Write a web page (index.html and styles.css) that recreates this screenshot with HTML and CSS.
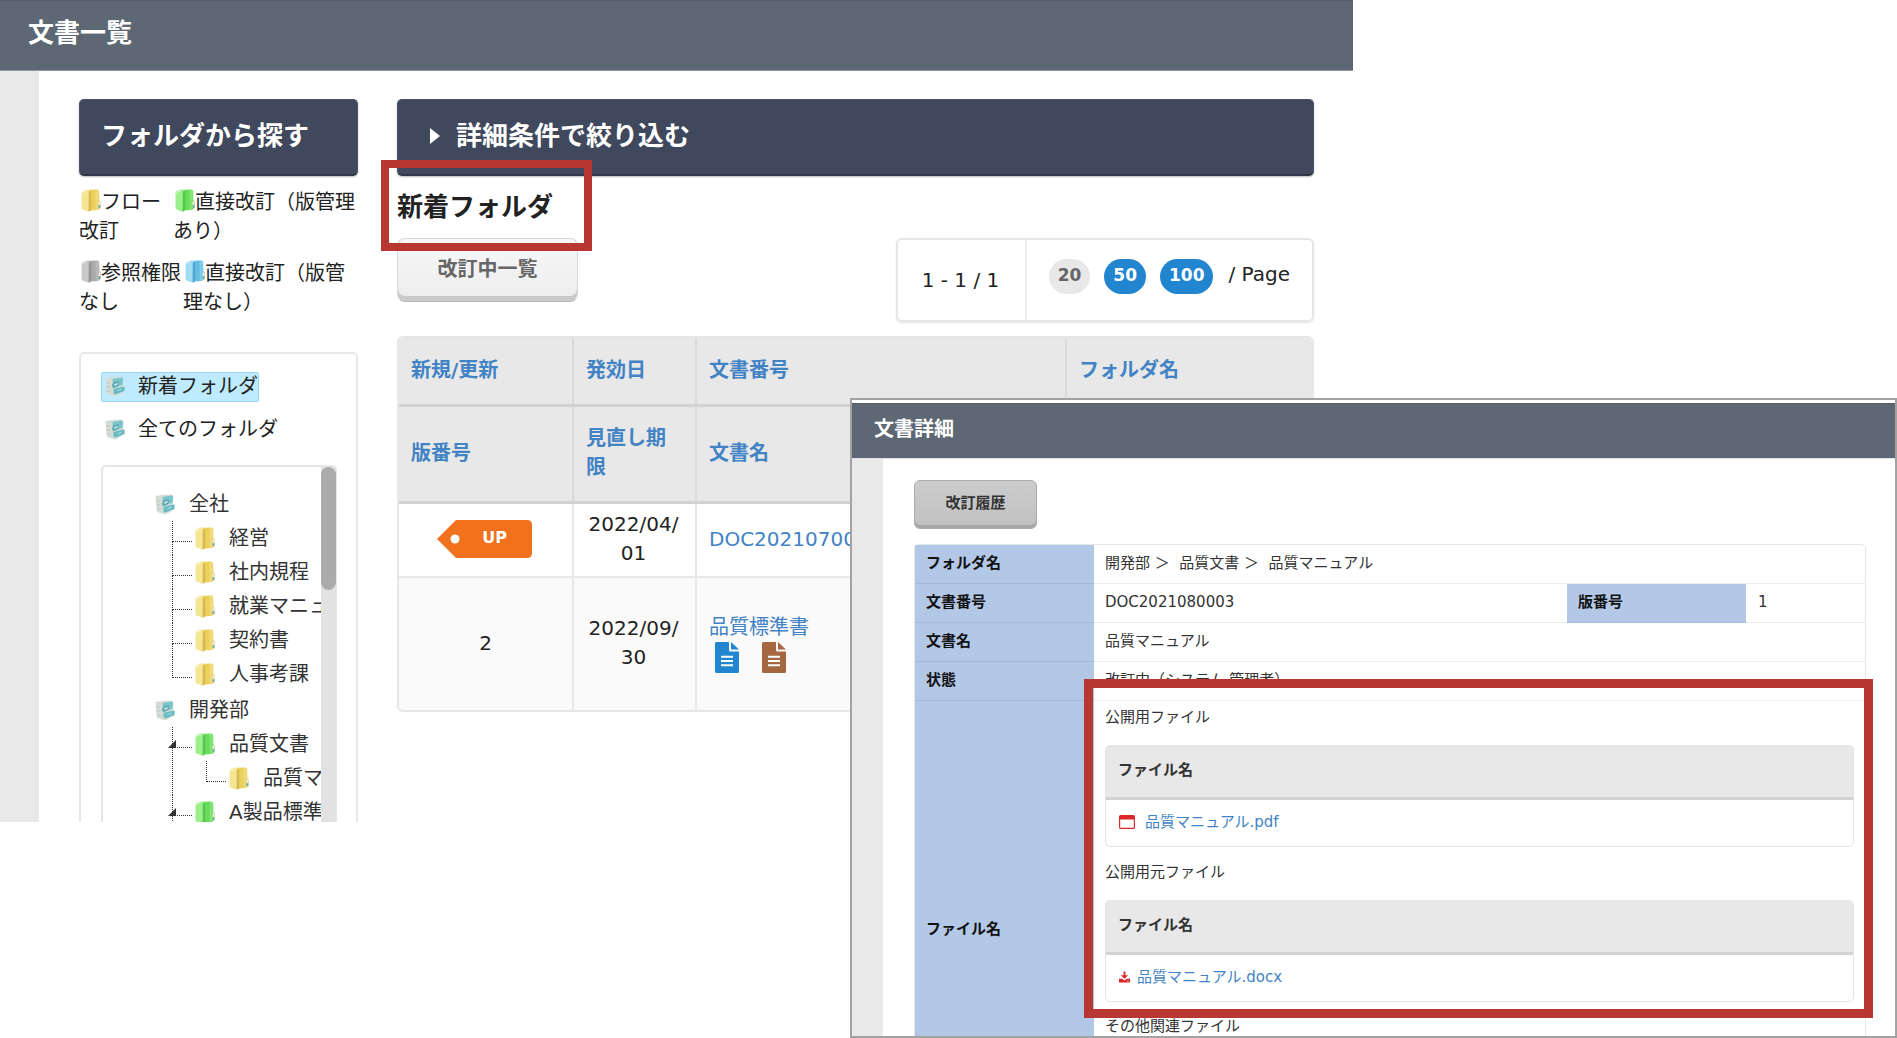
FILE: index.html
```html
<!DOCTYPE html>
<html lang="ja">
<head>
<meta charset="utf-8">
<title>文書一覧</title>
<link rel="stylesheet" href="styles.css">
</head>
<body>
<svg class="sprite" aria-hidden="true">
  <symbol id="folder" viewBox="0 0 20 23">
    <path d="M7 2.500 Q7 1 8.500 .8 L16 .6 Q18 .6 18.200 2.500 L18.500 19 Q18.500 21 16.500 21 L8 21.500 Z" fill="var(--mid)"/>
    <path d="M14.500 1 L16 .8 Q17.500 1 17.600 2.500 L18 19 Q18 20.500 16 21 L14.800 21 Z" fill="var(--light)" opacity=".5"/>
    <path d="M.5 4 Q.5 2.300 2.500 1.800 L5 .8 Q9 0 10 2 L10.300 20 Q10 22.600 7 22.600 Q5.500 22.600 4.500 21.500 L2 20.800 Q.5 20.500 .5 19 Z" fill="var(--light)"/>
    <path d="M7.800 3 Q8 2 9 1.400 Q10 1.800 10.100 3 L10.400 20 Q10 22.600 7.600 22.600 Z" fill="var(--dark)" opacity=".75"/>
    <path d="M1.500 4.500 Q1.500 3 3 2.600 L5.500 2" fill="none" stroke="#fff" stroke-width=".8" opacity=".7"/>
    <rect x="17.200" y="12" width="2.400" height="7.500" rx="1.200" fill="#f5f3e0" stroke="var(--dark)" stroke-width=".4"/>
    <rect x="17.500" y="16" width="1.800" height="3" rx=".8" fill="#5fb0a0"/>
  </symbol>
  <symbol id="cabinet" viewBox="0 0 20 21">
    <path d="M.5 2 L7 1 L16.500 .5 L18.500 2 L18 10 L19.500 11 L19.500 15.500 L10.500 20.500 L2 18 Z" fill="#d5dcd6"/>
    <path d="M1 6.500 L5 7.500 M1.300 10.500 L5.300 11.500 M1.500 14.500 L5.500 15.800" stroke="#b9c3be" stroke-width=".8"/>
    <path d="M7.500 3 L16.500 1.500 L18 2.500 L17.500 9 L8 11 Z" fill="#79c5cb"/>
    <path d="M7 9 L9 6 L14 5.500 L13.500 10 L8 12.500 Z" fill="#5ba8b2"/>
    <path d="M9 8 L13 7 L12.500 8.700 L9.500 10 Z" fill="#c5e4e6"/>
    <path d="M8.500 13 L14 11.500 L19.500 10.500 L19.500 14.800 L10.500 18.500 L8.500 17.500 Z" fill="#68bac3"/>
    <path d="M12.500 14.500 L16.500 13.200" stroke="#b5e0e4" stroke-width="1"/>
  </symbol>
  <symbol id="doc" viewBox="0 0 24 32">
    <path d="M1.500 0 H14 V8 Q14 9.500 15.500 9.500 H24 V29.500 Q24 31 22.500 31 H1.500 Q0 31 0 29.500 V1.500 Q0 0 1.500 0 Z" fill="currentColor"/>
    <path d="M16 0 L24 7.500 H16 Z" fill="currentColor"/>
    <path d="M6 14.800 H18 M6 19 H18 M6 23.200 H18" stroke="#fff" stroke-width="1.900"/>
  </symbol>
</svg>

<div class="canvas">
  <main class="window list-window">
    <header class="title-bar"><h1>文書一覧</h1></header>
    <div class="window-body">
      <aside class="rail"></aside>
      <div class="list-content">
        <section class="sidebar">
          <h2 class="panel-title">フォルダから探す</h2>
          <div class="legend">
            <span class="legend-flow"><svg class="folder yellow"><use href="#folder"/></svg>フロー改訂</span>
            <span><svg class="folder green"><use href="#folder"/></svg>直接改訂（版管理あり）</span>
          </div>
          <div class="legend">
            <span class="legend-none"><svg class="folder grey"><use href="#folder"/></svg>参照権限なし</span>
            <span><svg class="folder blue"><use href="#folder"/></svg>直接改訂（版管理なし）</span>
          </div>
          <nav class="folder-box">
            <a href="#" class="root-link selected"><svg class="cabinet"><use href="#cabinet"/></svg>新着フォルダ</a>
            <a href="#" class="root-link"><svg class="cabinet"><use href="#cabinet"/></svg>全てのフォルダ</a>
            <div class="tree-box">
              <ul class="tree">
                <li><a href="#"><svg class="cabinet"><use href="#cabinet"/></svg>全社</a>
                  <ul class="branch">
                    <li><a href="#"><svg class="folder yellow"><use href="#folder"/></svg>経営</a></li>
                    <li><a href="#"><svg class="folder yellow"><use href="#folder"/></svg>社内規程</a></li>
                    <li><a href="#"><svg class="folder yellow"><use href="#folder"/></svg>就業マニュ</a></li>
                    <li><a href="#"><svg class="folder yellow"><use href="#folder"/></svg>契約書</a></li>
                    <li><a href="#"><svg class="folder yellow"><use href="#folder"/></svg>人事考課</a></li>
                  </ul>
                </li>
                <li><a href="#"><svg class="cabinet"><use href="#cabinet"/></svg>開発部</a>
                  <ul class="branch continued">
                    <li class="open"><a href="#"><svg class="folder green"><use href="#folder"/></svg>品質文書</a>
                      <ul class="branch">
                        <li><a href="#"><svg class="folder yellow"><use href="#folder"/></svg>品質マ</a></li>
                      </ul>
                    </li>
                    <li class="open"><a href="#"><svg class="folder green"><use href="#folder"/></svg>A製品標準</a></li>
                  </ul>
                </li>
              </ul>
              <div class="scrollbar"><div class="thumb"></div></div>
            </div>
          </nav>
        </section>

        <section class="results">
          <h2 class="panel-title filter-title"><svg class="caret" viewBox="0 0 10 16"><path d="M0 0 L10 8 L0 16 Z" fill="#fff"/></svg>詳細条件で絞り込む</h2>
          <h3 class="folder-heading">新着フォルダ</h3>
          <div class="toolbar">
            <button type="button" class="btn btn-light">改訂中一覧</button>
            <div class="pager">
              <div class="pager-range">1 - 1 / 1</div>
              <div class="pager-size">
                <a href="#" class="pill current">20</a>
                <a href="#" class="pill">50</a>
                <a href="#" class="pill">100</a>
                <span>/ Page</span>
              </div>
            </div>
          </div>
          <div class="doc-table-frame">
            <table class="doc-table">
              <colgroup><col class="col-kind"><col class="col-date"><col class="col-doc"><col></colgroup>
              <thead>
                <tr class="head-first"><th><a href="#">新規/更新</a></th><th><a href="#">発効日</a></th><th><a href="#">文書番号</a></th><th><a href="#">フォルダ名</a></th></tr>
                <tr class="head-second"><th><a href="#">版番号</a></th><th><a href="#">見直し期限</a></th><th colspan="2"><a href="#">文書名</a></th></tr>
              </thead>
              <tbody>
                <tr class="row-first"><td class="center"><span class="tag"><svg viewBox="0 0 95 38" class="tag-shape"><path d="M19 0 H90 Q95 0 95 5 V33 Q95 38 90 38 H19 L0 19 Z" fill="#f2711c"/><circle cx="18" cy="19" r="4.500" fill="#fff"/></svg><b>UP</b></span></td><td class="date">2022/04/<br>01</td><td colspan="2"><a href="#">DOC20210700</a></td></tr>
                <tr class="row-second"><td class="center">2</td><td class="date">2022/09/<br>30</td><td colspan="2"><a href="#">品質標準書</a>
                  <div class="doc-icons"><svg class="doc doc-blue"><use href="#doc"/></svg><svg class="doc doc-brown"><use href="#doc"/></svg></div></td></tr>
              </tbody>
            </table>
          </div>
        </section>
      </div>
    </div>
  </main>

  <section class="window detail-window">
    <header class="title-bar detail-bar"><h1>文書詳細</h1></header>
    <div class="window-body">
      <aside class="rail detail-rail"></aside>
      <div class="detail-content">
        <button type="button" class="btn btn-dark">改訂履歴</button>
        <table class="detail-table">
          <colgroup><col class="col-label"><col><col class="col-label"><col class="col-version"></colgroup>
          <tbody>
            <tr><th>フォルダ名</th><td colspan="3">開発部 ＞&nbsp; 品質文書 ＞&nbsp; 品質マニュアル</td></tr>
            <tr><th>文書番号</th><td>DOC2021080003</td><th>版番号</th><td class="version">1</td></tr>
            <tr><th>文書名</th><td colspan="3">品質マニュアル</td></tr>
            <tr><th>状態</th><td colspan="3">改訂中（システム 管理者）</td></tr>
            <tr><th>ファイル名</th><td colspan="3" class="files">
              <div class="marked">
                <p>公開用ファイル</p>
                <table class="file-table">
                  <thead><tr><th>ファイル名</th></tr></thead>
                  <tbody><tr><td><a href="#" class="file-link"><svg class="icon-window" viewBox="0 0 16 14"><path d="M1.500 0 H14.500 Q16 0 16 1.500 V12.500 Q16 14 14.500 14 H1.500 Q0 14 0 12.500 V1.500 Q0 0 1.500 0 Z M1.200 4.500 V12.800 H14.800 V4.500 Z" fill="#db2828" fill-rule="evenodd"/></svg>品質マニュアル.pdf</a></td></tr></tbody>
                </table>
                <p>公開用元ファイル</p>
                <table class="file-table">
                  <thead><tr><th>ファイル名</th></tr></thead>
                  <tbody><tr><td><a href="#" class="file-link tight"><svg class="icon-download" viewBox="0 0 12 12"><path d="M5 0 H7 V4 H10 L6 8 L2 4 H5 Z M0 8 H3.500 L6 9.800 L8.500 8 H12 V12 H0 Z" fill="#db2828"/><path d="M8.500 10.500 H10.800" stroke="#fff" stroke-width=".6"/></svg>品質マニュアル.docx</a></td></tr></tbody>
                </table>
              </div>
              <p>その他関連ファイル</p>
            </td></tr>
          </tbody>
        </table>
      </div>
    </div>
  </section>
</div>
</body>
</html>
```
FILE: styles.css
```css
* { box-sizing: border-box; }

body {
  margin: 0;
  overflow: hidden;
  background: #fff;
  color: #222;
  font: 20px/29px "DejaVu Sans", "Noto Sans CJK JP", sans-serif;
}

h1, h2, h3, p, ul { margin: 0; padding: 0; }
a { color: #4183c4; text-decoration: none; }
svg { display: block; flex: none; }
.sprite { position: absolute; width: 0; height: 0; }

/* two overlapping windows */
.canvas {
  display: grid;
  grid-template-columns: minmax(0, 850fr) minmax(0, 503fr) minmax(0, 544fr);
  grid-template-rows: 398px 424px minmax(0, 1fr);
  height: 100vh;
}
.window { display: flex; flex-direction: column; min-height: 0; overflow: hidden; background: #fff; }
.list-window { grid-area: 1 / 1 / 3 / 3; }
.detail-window {
  grid-area: 2 / 2 / 4 / 4;
  z-index: 1;
  padding-top: 3px;
  border: 2px solid #a2a2a2;
  font-size: 15px;
  line-height: 22px;
}

.title-bar {
  flex: none;
  height: 71px;
  padding: 18px 28px;
  background: #5d6874;
  border-top: 1px solid #535e69;
  border-bottom: 1px solid #8d959e;
  color: #fff;
}
.title-bar h1 { font-size: 26px; line-height: 28px; }
.detail-bar { height: 56px; padding: 11px 22px; border-bottom-color: #dfe1e4; }
.detail-bar h1 { font-size: 20px; }

.window-body { display: flex; flex: 1; min-height: 0; }
.rail { flex: none; width: 39px; background: #e9e9e9; }
.detail-rail { width: 31px; }

/* list window */
.list-content { display: flex; flex: 1; gap: 39px; min-width: 0; padding: 28px 39px 0 40px; }
.sidebar { flex: none; width: 279px; }
.results { flex: 1; min-width: 0; }

.panel-title {
  display: flex;
  align-items: center;
  height: 77px;
  padding: 0 21px 2px;
  border: 1px solid #4b546a;
  border-bottom: 2px solid #2f3749;
  border-radius: 5px;
  background: #3f485c;
  box-shadow: 0 1px 2px #bbb;
  color: #fff;
  font-size: 26px;
}
.filter-title { gap: 16px; padding-left: 32px; }
.caret { width: 10px; height: 16px; }

.legend { display: flex; margin-bottom: 13px; }
.panel-title + .legend { margin-top: 12px; }
.legend span { flex: 1; }
.legend .legend-flow { flex: none; width: 94px; }
.legend .legend-none { flex: none; width: 104px; }
.legend .folder { display: inline-block; margin-left: 2px; vertical-align: -3px; }

.folder { width: 20px; height: 23px; }
.yellow { --light: #f5e693; --mid: #ecd05c; --dark: #cda83c; }
.green { --light: #9cf08c; --mid: #68dd5c; --dark: #3fb83b; }
.grey { --light: #c9c9c9; --mid: #a9a9a9; --dark: #828282; }
.blue { --light: #9fdcf2; --mid: #63bde2; --dark: #3696c4; }
.cabinet { width: 20px; height: 21px; }

.folder-box {
  display: flex;
  flex-direction: column;
  align-items: flex-start;
  margin-top: 35px;
  padding: 18px 20px;
  border: 2px solid #e8e8e8;
  border-radius: 5px;
}
.root-link {
  display: flex;
  align-items: center;
  gap: 13px;
  height: 30px;
  margin-bottom: 13px;
  padding: 0 0 1px 3px;
  border: 1px solid transparent;
  border-radius: 2px;
  color: #222;
}
.root-link.selected { border-color: #99d5f2; background: #beebff; }

.tree-box {
  display: flex;
  align-self: stretch;
  margin-top: 7px;
  margin-right: -1px;
  border: 2px solid #e6e6e6;
  border-right-width: 1px;
  border-radius: 5px;
}
.tree { flex: 1; min-width: 0; overflow: hidden; padding: 20px 0 20px 52px; list-style: none; white-space: nowrap; }
.tree ul { list-style: none; }
.tree a { display: flex; align-items: center; gap: 14px; height: 34px; color: #333; }
.branch { padding-left: 40px; margin-bottom: 2px; }
.branch .branch { padding-left: 34px; margin-bottom: 0; }
.branch li { position: relative; }
.branch li::before {
  content: "";
  position: absolute;
  left: -23px;
  top: 0;
  width: 19px;
  height: 20px;
  border-left: 1px dotted #333;
  border-bottom: 1px dotted #333;
}
.branch li:not(:last-child)::after,
.continued > li::after {
  content: "";
  position: absolute;
  left: -23px;
  top: 20px;
  bottom: 0;
  border-left: 1px dotted #333;
}
.open > a::before {
  content: "";
  position: absolute;
  left: -27px;
  top: 13px;
  border-left: 8px solid transparent;
  border-bottom: 8px solid #333;
}
.scrollbar { flex: none; width: 15px; background: #e2e2e2; }
.thumb { height: 123px; border-radius: 8px; background: #ababab; }

.folder-heading { display: inline-block; position: relative; margin: 16px 0; font-size: 26px; line-height: 30px; color: #222; }
.folder-heading::after {
  content: "";
  position: absolute;
  z-index: 1;
  inset: -32px -39px -29px -16px;
  border: 8px solid #b93732;
}

.toolbar { display: flex; justify-content: space-between; align-items: flex-start; }
.btn { border: 1px solid; border-radius: 8px; font-family: inherit; font-weight: bold; }
.btn-light {
  width: 181px;
  height: 64px;
  padding: 0 0 6px;
  border-color: #d8d8d8;
  border-bottom-color: #b8b8b8;
  background: linear-gradient(#f8f8f8, #ececec);
  box-shadow: inset 0 -5px #c9c9c9;
  color: #666;
  font-size: 20px;
}
.pager { display: flex; height: 84px; border: 2px solid #e6e6e6; border-radius: 6px; box-shadow: 0 1px 2px #e2e2e2; }
.pager-range { width: 129px; padding: 26px 0 0 24px; border-right: 2px solid #eee; }
.pager-size { display: flex; gap: 14px; padding: 19px 22px 0; line-height: 30px; }
.pill {
  height: 35px;
  padding: 0 9px;
  border-radius: 18px;
  background: #2185d0;
  color: #fff;
  font-size: 17px;
  font-weight: bold;
  line-height: 33px;
}
.pill.current { background: #e8e8e8; color: #666; }
.pill + span { margin-left: 1px; }

.doc-table-frame { margin-top: 14px; overflow: hidden; border: 2px solid #e6e6e6; border-radius: 6px; }
.doc-table { width: 100%; table-layout: fixed; border-collapse: collapse; }
.col-kind { width: 174px; }
.col-date { width: 123px; }
.col-doc { width: 370px; }
.doc-table th, .doc-table td { padding: 0 12px 1px; text-align: left; }
.doc-table th + th { border-left: 2px solid #d9d9d9; }
.doc-table td + td { border-left: 2px solid #e8e8e8; }
.doc-table th { background: #e8e8e8; border-bottom: 3px solid #d2d2d2; }
.head-first { height: 67px; }
.head-second { height: 97px; }
.row-first { height: 75px; }
.row-first td { border-bottom: 2px solid #e8e8e8; }
.row-second { height: 133px; background: #fafafa; }
.doc-table .center { text-align: center; }
.doc-table .date { padding: 0 2px 2px 0; text-align: center; }
.tag { display: grid; width: 95px; height: 38px; margin-left: 26px; }
.tag-shape, .tag b { grid-area: 1 / 1; }
.tag b { padding: 0 0 0 20px; color: #fff; font-size: 16px; line-height: 35px; }
.doc-icons { display: flex; gap: 23px; padding: 0 6px; }
.doc { width: 24px; height: 32px; }
.doc-blue { color: #2185d0; }
.doc-brown { color: #a5673f; }

/* detail window */
.detail-content { flex: 1; min-width: 0; padding: 21px 29px 0 31px; }
.btn-dark {
  display: block;
  width: 123px;
  height: 49px;
  padding: 0 0 6px;
  border-color: #ababab;
  border-radius: 6px;
  background: linear-gradient(#cbcccd, #c0c0c1);
  box-shadow: inset 0 -3px #a6a6a8;
  color: #333;
  font-size: 15px;
}
.detail-table {
  width: 100%;
  margin-top: 15px;
  table-layout: fixed;
  border: 1px solid #e6e6e6;
  border-radius: 5px;
  border-spacing: 0;
}
.col-label { width: 179px; }
.col-version { width: 119px; }
.detail-table > tbody > tr { height: 39px; }
.detail-table th, .detail-table td { padding: 0 11px 3px; text-align: left; border-bottom: 1px solid #ececec; }
.detail-table > tbody > tr > th { background: #b3c7e7; border-bottom-color: #a6b9d9; color: #111; }
.detail-table td { color: #333; }
.detail-table .version { padding-left: 12px; }
.detail-table .files { padding: 5px 11px 122px; vertical-align: top; }
.marked { position: relative; margin-bottom: 13px; }
.marked::after {
  content: "";
  position: absolute;
  inset: -27px -19px -16px -21px;
  border: 9px solid #b93732;
  pointer-events: none;
}
.file-table {
  width: 100%;
  margin: 17px 0 14px;
  border: 1px solid #e4e4e4;
  border-radius: 5px;
  border-spacing: 0;
}
.detail-table .file-table th { height: 54px; padding-left: 12px; background: #e8e8e8; border-bottom: 3px solid #d2d2d2; }
.detail-table .file-table td { height: 46px; padding-left: 13px; border: 0; }
.file-table:last-child { margin-bottom: 0; }
.file-link { display: flex; align-items: center; gap: 10px; }
.file-link.tight { gap: 7px; }
.icon-window { width: 16px; height: 14px; }
.icon-download { width: 11px; height: 12px; }
```
